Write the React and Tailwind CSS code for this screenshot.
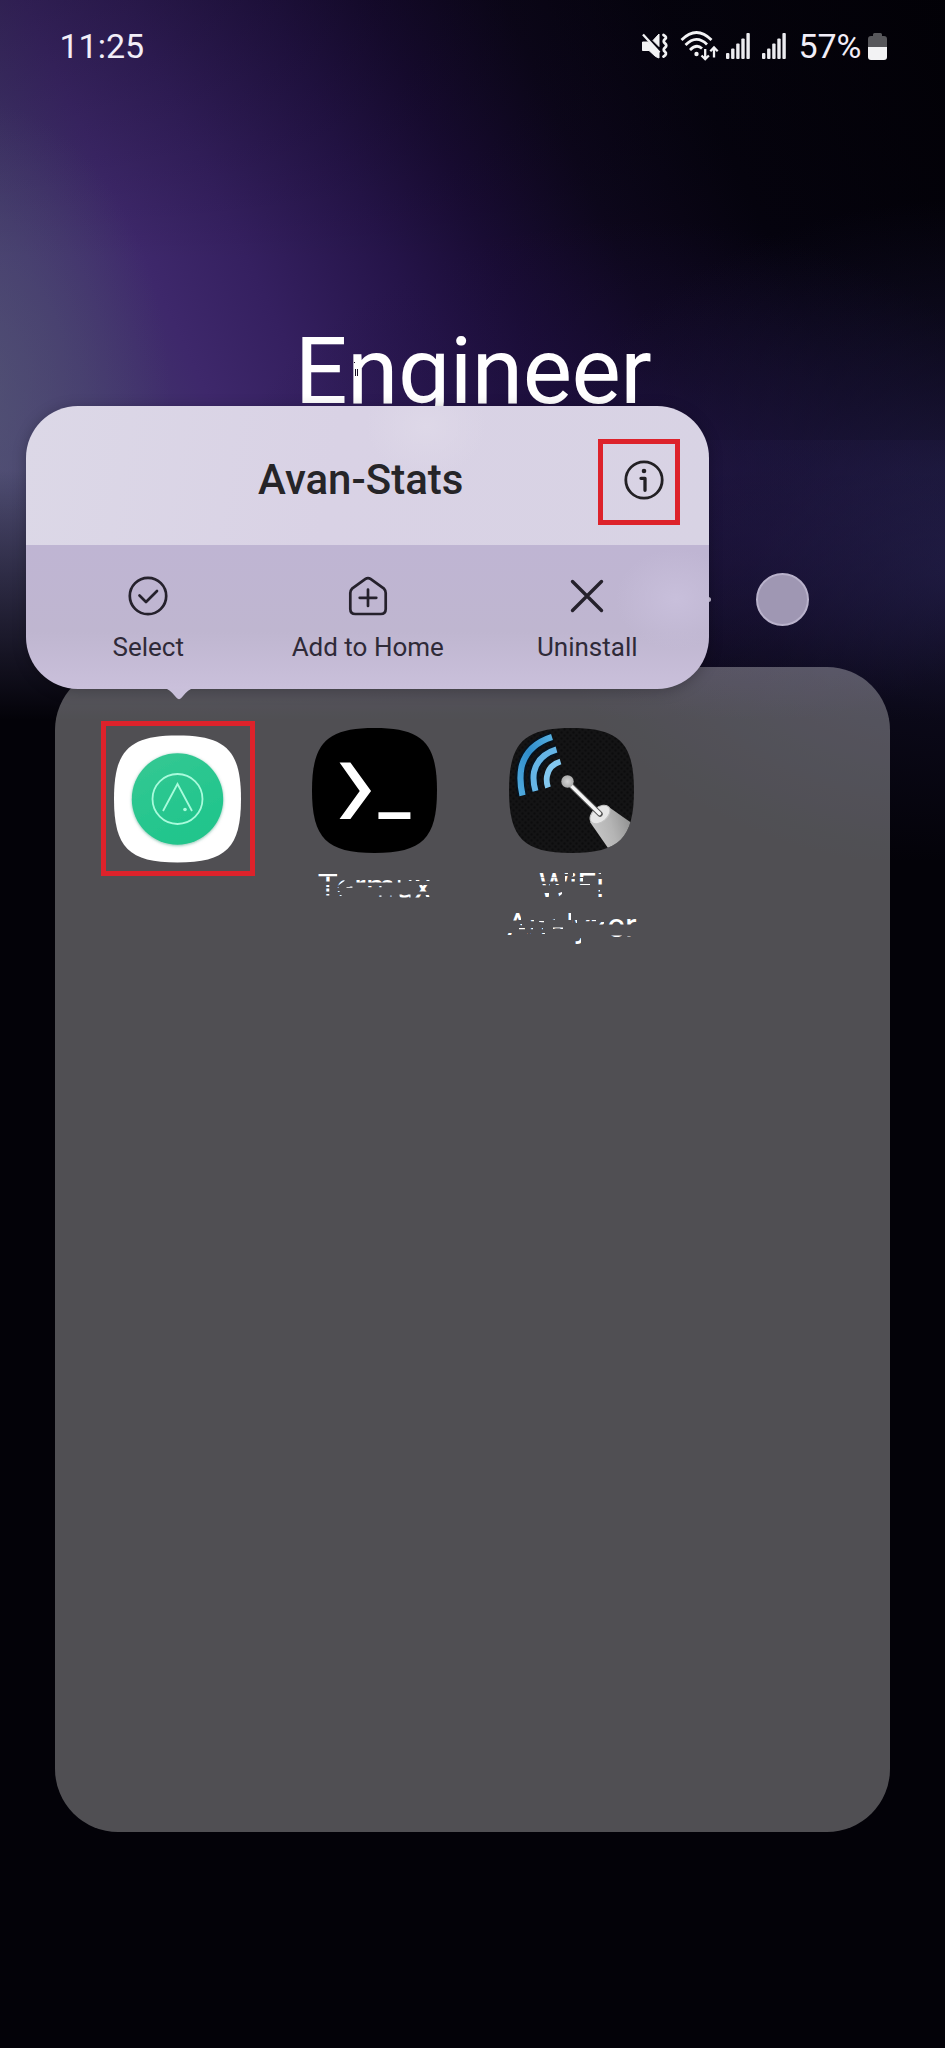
import React from "react";

const SQUIRCLE =
  "M63.5 0C112 0 127 15 127 63.5S112 127 63.5 127S0 112 0 63.5S15 0 63.5 0Z";

function MuteVibrateIcon() {
  return (
    <svg width="28" height="28" viewBox="0 0 28 28" fill="none">
      <path d="M1.500 10H7L10 12L18 20.500V26L14.500 24.500L8 18.500H1.500Z" fill="#f2f2f4" stroke="#f2f2f4" strokeWidth="1" strokeLinejoin="round" />
      <path d="M12 8.500L18 2V14.500Z" fill="#f2f2f4" stroke="#f2f2f4" strokeWidth="1" strokeLinejoin="round" />
      <path d="M2 2.500L18.500 20.500" stroke="#f2f2f4" strokeWidth="2.400" />
      <path
        d="M22.500 3q4 2.200 1.500 4.200t0 4.200t0 4.200t0 4.200t-1.500 4.800"
        stroke="#f2f2f4"
        strokeWidth="2.800"
        strokeLinecap="round"
      />
    </svg>
  );
}

function WifiIcon() {
  return (
    <svg width="40" height="32" viewBox="0 0 40 32" fill="none" stroke="#f2f2f4">
      <path d="M1.500 10Q16.500 -5 31.500 10" strokeWidth="2.800" />
      <path d="M5.500 15Q16.500 4 27 14.500" strokeWidth="2.800" />
      <path d="M10 20Q16.500 13.500 22 18.500" strokeWidth="2.800" />
      <circle cx="16.500" cy="24" r="2.200" fill="#f2f2f4" stroke="none" />
      <path d="M25.200 19v10M21.500 25.500l3.700 3.700l3.700-3.700" strokeWidth="2.300" />
      <path d="M34 27.500v-10M30.300 21.200l3.700-3.700l3.700 3.700" strokeWidth="2.300" />
    </svg>
  );
}

function SignalIcon() {
  return (
    <svg width="24" height="26" viewBox="0 0 24 26" fill="#ececf0">
      <rect x="0" y="20" width="3.400" height="6" rx="1" />
      <rect x="5.100" y="15.500" width="3.400" height="10.500" rx="1" />
      <rect x="10.200" y="10.500" width="3.400" height="15.500" rx="1" />
      <rect x="15.300" y="5.500" width="3.400" height="20.500" rx="1" />
      <rect x="20.400" y="0" width="3.400" height="26" rx="1" />
    </svg>
  );
}

function BatteryIcon() {
  return (
    <svg width="19" height="27" viewBox="0 0 19 27">
      <path d="M5 3V1.500Q5 0 6.500 0H12.500Q14 0 14 1.500V3H16Q19 3 19 6V14H0V6Q0 3 3 3Z" fill="#57575b" />
      <path d="M0 14H19V24Q19 27 16 27H3Q0 27 0 24Z" fill="#f2f2f4" />
    </svg>
  );
}

function StatusBar() {
  return (
    <header className="flex h-[92px] items-center justify-between pl-[59.500px] pr-[58.500px] text-[34px] leading-none text-[#f2eef8]">
      <span>11:25</span>
      <div className="flex items-center">
        <MuteVibrateIcon />
        <div className="ml-[11px] flex">
          <WifiIcon />
        </div>
        <div className="ml-[6px] flex">
          <SignalIcon />
        </div>
        <div className="ml-[12px] flex">
          <SignalIcon />
        </div>
        <span className="ml-[12.500px]">57%</span>
        <div className="ml-[6px] flex">
          <BatteryIcon />
        </div>
      </div>
    </header>
  );
}

function AvanStatsIcon() {
  return (
    <svg width="127" height="128" viewBox="0 0 127 127">
      <defs>
        <linearGradient id="avanGreen" x1="0" y1="0" x2="0.500" y2="1">
          <stop offset="0" stopColor="#35c893" />
          <stop offset="1" stopColor="#20c58c" />
        </linearGradient>
        <filter id="avanShadow" x="-20%" y="-20%" width="140%" height="140%">
          <feDropShadow dx="0" dy="0.800" stdDeviation="1.500" floodColor="#0b7a55" floodOpacity="0.500" />
        </filter>
      </defs>
      <path d={SQUIRCLE} fill="#fff" />
      <circle cx="63.500" cy="63.500" r="45.700" fill="url(#avanGreen)" filter="url(#avanShadow)" />
      <g fill="none" stroke="#a8fbdc" strokeWidth="1.800">
        <circle cx="63.500" cy="63.500" r="25" />
        <path d="M49 75.500L63.500 48.500L78 75.500" />
      </g>
      <circle cx="71" cy="74" r="1.800" fill="#a8fbdc" />
    </svg>
  );
}

function TermuxIcon() {
  return (
    <svg width="125" height="125" viewBox="0 0 127 127">
      <path d={SQUIRCLE} fill="#000" />
      <path d="M28 35H39L60 64L39 92.500H28L48.500 64Z" fill="#fff" />
      <path d="M67.500 85.500H100V92.500H67.500Z" fill="#fff" />
    </svg>
  );
}

function WifiAnalyzerIcon() {
  return (
    <svg width="125" height="125" viewBox="0 0 125 125">
      <defs>
        <clipPath id="analyzerShape">
          <path d={SQUIRCLE} transform="scale(0.984)" />
        </clipPath>
        <pattern id="mesh" width="6" height="6" patternUnits="userSpaceOnUse">
          <rect width="6" height="6" fill="#141415" />
          <circle cx="1.500" cy="1.500" r="1.200" fill="#0c0c0d" />
          <circle cx="4.500" cy="4.500" r="1.200" fill="#0c0c0d" />
        </pattern>
        <linearGradient id="outerWave" x1="1" y1="0" x2="0" y2="1">
          <stop offset="0" stopColor="#55afe0" />
          <stop offset="0.500" stopColor="#2f8dcb" />
          <stop offset="1" stopColor="#4fa9dd" />
        </linearGradient>
        <linearGradient id="handle" x1="0" y1="0.600" x2="1" y2="0.300">
          <stop offset="0" stopColor="#c9c9c9" />
          <stop offset="0.500" stopColor="#b4b4b4" />
          <stop offset="1" stopColor="#8d8d8d" />
        </linearGradient>
        <radialGradient id="ball">
          <stop offset="0" stopColor="#d5d5d5" />
          <stop offset="1" stopColor="#aaa" />
        </radialGradient>
      </defs>
      <g clipPath="url(#analyzerShape)">
        <rect width="125" height="125" fill="url(#mesh)" />
        <g fill="none">
          <path d="M43 9Q18 17 12.500 39Q10 52 13.500 67.500" stroke="#06131f" strokeWidth="10" />
          <path d="M47.500 21.500Q29 27 25 44Q23.500 53 26.500 63" stroke="#06131f" strokeWidth="10" />
          <path d="M43 9Q18 17 12.500 39Q10 52 13.500 67.500" stroke="url(#outerWave)" strokeWidth="6.200" />
          <path d="M47.500 21.500Q29 27 25 44Q23.500 53 26.500 63" stroke="#65b5e6" strokeWidth="6" />
          <path d="M51.500 33.500Q40 37 38 48Q37 54 39 59.500" stroke="#83c8ef" strokeWidth="5.800" />
        </g>
        <path d="M81 94L100.500 79.500L124 96V115L99 120Z" fill="url(#handle)" />
        <ellipse cx="91" cy="86.500" rx="11.500" ry="7.300" transform="rotate(-40 91 86.500)" fill="#e6e6e6" stroke="#c2c2c2" strokeWidth="1" />
        <path d="M63 58.500L91 86" stroke="#555" strokeWidth="5.500" strokeLinecap="round" />
        <path d="M62.500 58L90.500 85.500" stroke="#f5f5f5" strokeWidth="3.600" strokeLinecap="round" />
        <circle cx="58.500" cy="53.500" r="6.200" fill="url(#ball)" />
      </g>
    </svg>
  );
}

function AppTile({ icon, children }) {
  return (
    <div className="flex w-[197px] flex-col items-center">
      <div className="flex h-[136px] items-start justify-center">{icon}</div>
      {children}
    </div>
  );
}

function Folder() {
  return (
    <section className="mx-[55px] h-[1165px] rounded-[63px] bg-white/[0.305] pt-[60.500px]">
      <div className="flex pl-[24px]">
        <AppTile
          icon={
            <div className="pt-[7px]">
              <AvanStatsIcon />
            </div>
          }
        />
        <AppTile icon={<TermuxIcon />}>
          {/* The label is only partly painted: each clip rectangle is one visible strip. */}
          <div className="mt-[1.500px] flex h-[45px] w-[130px] items-center justify-center text-[34px] leading-[43px] text-white [clip-path:path('M6_6h22v5.500h-22zM14_12h7v4.500h-7zM15_20h5v2h-5zM14_23.500h6v3h-6zM14_29h6v1.500h-6zM26_16l5_-2h4v2l-7_5h-3zM25_22h4v1h-4zM25_26h5v1h-5zM27_30h5v1h-5zM37_21.500h6v1.300h-6zM43_13.500h40v4h-40zM86_13h5v4.500h-5zM97_14.500h5v1.500h-5zM106_14.500h5v1.500h-5zM114_14.500h6v1.500h-6zM56_21h8v1.200h-8zM66_21h6v1.200h-6zM110_20h9v6.500h-11zM68_30.500h4v1.300h-4zM78_30.500h4v1.300h-4zM90_29.500h11v3h-11zM104_29.500h8v3h-8zM116_30h4v2h-4z')]">
            <span className="-mt-[3px]">Termux</span>
          </div>
        </AppTile>
        <AppTile icon={<WifiAnalyzerIcon />}>
          <div className="mt-[1.500px] flex h-[85px] w-[145px] flex-col items-center text-center text-[34px] leading-[40.300px] text-white [clip-path:path('M36_6h22v6.500h-22zM38_13h22v3.500h-22zM59_6h10v3h-10zM66_11h10v5.500h-10zM74_6h23v6h-23zM78_13h6v3.500h-6zM42_19h9v1.200h-9zM55_19h7v1h-7zM79_19h12v1h-12zM96_12.500h8v7h-8zM97_8h5v1h-5zM97_25h4v1.500h-4zM96_29h8v4h-8zM42_28h8v5h-8zM57_29l6_-2v2l-5_4zM13_48h9v7h-9zM14_54h5v1.500h-5zM17_59h6v1.300h-6zM31_55h4v1.300h-4zM40_56h5v1.300h-5zM20_63h6v1.300h-6zM31_63h3v1.300h-3zM41_63h3v1.300h-3zM54_62.500h10v1.500h-10zM8_68h5v2h-5zM28_68h4v1h-4zM42_68h4v1h-4zM6_72h4v1.500h-4zM32_72h3v1h-3zM42_72h4v1h-4zM54_72h12v1.300h-12zM67_48h5v7h-5zM73_55h5v3h-5zM75_73h7v8h-7zM86_55h11v1.300h-11zM100_57h5v2.500h-5zM108_54h18v5.500h-18zM127_54h12v5.500h-12zM111_70.500h12v2.500h-12zM128_71.500h5v2h-5zM52_54h4v1h-4z')]">
            <span>WiFi</span>
            <span>Analyzer</span>
          </div>
        </AppTile>
      </div>
    </section>
  );
}

function SelectIcon() {
  return (
    <svg width="40" height="40" viewBox="0 0 40 40" fill="none" stroke="#25212c" strokeWidth="2.700" strokeLinecap="round" strokeLinejoin="round">
      <circle cx="20" cy="20" r="18.200" />
      <path d="M11.500 19.500L18 26L29 15" />
    </svg>
  );
}

function AddHomeIcon() {
  return (
    <svg width="40" height="40" viewBox="0 0 40 40" fill="none" stroke="#25212c" strokeWidth="2.700" strokeLinecap="round" strokeLinejoin="round">
      <path d="M17.500 2.900Q20 1.200 22.500 2.900L36 12.700Q37.700 14.500 37.700 17V33Q37.700 38 32.700 38H7.300Q2.300 38 2.300 33V17Q2.300 14.500 4 12.700Z" />
      <path d="M20 13.500V30M11.700 21.800H28.300" />
    </svg>
  );
}

function UninstallIcon() {
  return (
    <svg width="40" height="40" viewBox="0 0 40 40" fill="none" stroke="#25212c" strokeWidth="3.400" strokeLinecap="round">
      <path d="M5.500 5.500L34.500 34.500M34.500 5.500L5.500 34.500" />
    </svg>
  );
}

function InfoIcon() {
  return (
    <svg width="40" height="40" viewBox="0 0 40 40" fill="none" stroke="#222024" strokeWidth="2.800" strokeLinecap="round" strokeLinejoin="round">
      <circle cx="20" cy="20" r="18.200" />
      <circle cx="20" cy="11" r="2.300" fill="#222024" stroke="none" />
      <path d="M17 18.300H21V30.300" strokeWidth="3.300" />
    </svg>
  );
}

function Action({ icon, label }) {
  return (
    <div className="flex w-[219.500px] flex-col items-center text-[26px] leading-[30px] text-[#2f2a38]">
      {icon}
      <span className="mt-[16.500px] whitespace-nowrap">{label}</span>
    </div>
  );
}

function ContextMenu() {
  return (
    <div className="absolute left-[26px] top-[406px] w-[683px]">
      <div className="overflow-hidden rounded-[52px] shadow-[0_2px_14px_rgba(0,0,0,0.25)]">
        <div className="flex h-[139px] items-center bg-[radial-gradient(ellipse_60px_50px_at_400px_20px,#ded8e8,transparent),linear-gradient(100deg,#dcd8e7,#d9d2e5_45%,#d8d3e4)] pt-[8px]">
          <div className="w-[72px]" />
          <h2 className="flex-1 text-center text-[42px] font-medium leading-[48px] text-[#262528]">
            Avan-Stats
          </h2>
          <div className="mr-[45.500px]">
            <InfoIcon />
          </div>
        </div>
        <div className="flex h-[144px] bg-[radial-gradient(ellipse_60px_50px_at_650px_54px,#c8bfdb,transparent),linear-gradient(180deg,#bfb5d3,#bfb6d0_60%,#cac0db)] pl-[12.500px] pt-[30.500px]">
          <Action icon={<SelectIcon />} label="Select" />
          <Action icon={<AddHomeIcon />} label="Add to Home" />
          <Action icon={<UninstallIcon />} label="Uninstall" />
        </div>
      </div>
      <svg className="absolute left-[141px] top-[282.500px]" width="24" height="11" viewBox="0 0 24 11">
        <path d="M0 0H24C20 2 17 6 14.500 8.800Q12 11.500 9.500 8.800C7 6 4 2 0 0Z" fill="#c9c0da" />
      </svg>
      <div className="absolute left-[572px] top-[33px] h-[86px] w-[82px] border-[5px] border-[#dd222b]" />
    </div>
  );
}

function Wallpaper() {
  return (
    <div className="absolute inset-0">
      <div className="h-[760px] bg-[linear-gradient(180deg,transparent_470px,#030208_720px),radial-gradient(ellipse_200px_300px_at_-30px_400px,rgba(88,92,120,0.55),transparent),radial-gradient(ellipse_440px_360px_at_960px_560px,rgba(38,34,78,0.8),rgba(31,26,66,0.45)_50%,transparent),radial-gradient(ellipse_420px_300px_at_640px_520px,rgba(36,20,76,0.7),rgba(32,18,68,0.35)_50%,transparent),linear-gradient(180deg,rgba(3,2,8,0.25),transparent_260px),linear-gradient(65deg,#4a4570_10%,#43386d_20%,#3e286b_29%,#352060_37%,#251449_48%,#190c34_56%,#0d071c_66%,#05030e_78%,#020106)]" />
      <div className="-mt-[320px] h-[420px] bg-[radial-gradient(ellipse_420px_300px_at_960px_130px,rgba(36,32,76,0.6),rgba(28,24,60,0.3)_50%,transparent),radial-gradient(ellipse_280px_180px_at_760px_100px,rgba(32,20,66,0.6),transparent)]" />
    </div>
  );
}

export default function App() {
  return (
    <main className="relative h-[2048px] w-[945px] overflow-hidden bg-[#030208] font-['Roboto','Liberation_Sans',sans-serif]">
      <Wallpaper />
      <div className="relative">
        <StatusBar />
        <h1 className="mt-[220px] pl-[1px] text-center text-[93px] font-normal leading-[120px] tracking-[-0.500px] text-white">
          Engineer
        </h1>
        <div className="mt-[141px] flex justify-end pr-[136px]">
          <div className="h-[53px] w-[53px] rounded-full border-2 border-[#b9b2cb] bg-[#9f97b3]" />
        </div>
        <div className="mt-[41px]">
          <Folder />
        </div>
        {/* Sliver of the neighbouring page dot beside the menu. */}
        <div className="absolute left-[706px] top-[597px] h-[5px] w-[5px] rounded-full bg-[#c9c1da]" />
        <ContextMenu />
        {/* Small marks inside the left stem of the title's first "n". */}
        <svg className="absolute left-[353px] top-[362px]" width="6" height="15" viewBox="0 0 6 15" fill="#160d24">
          <rect x="1" y="0" width="1" height="1" />
          <rect x="2" y="7" width="1" height="7" />
          <rect x="4" y="7" width="1" height="7" />
        </svg>
        <div className="absolute left-[101px] top-[721px] h-[155px] w-[154px] border-[5px] border-[#dd222b]" />
      </div>
    </main>
  );
}
